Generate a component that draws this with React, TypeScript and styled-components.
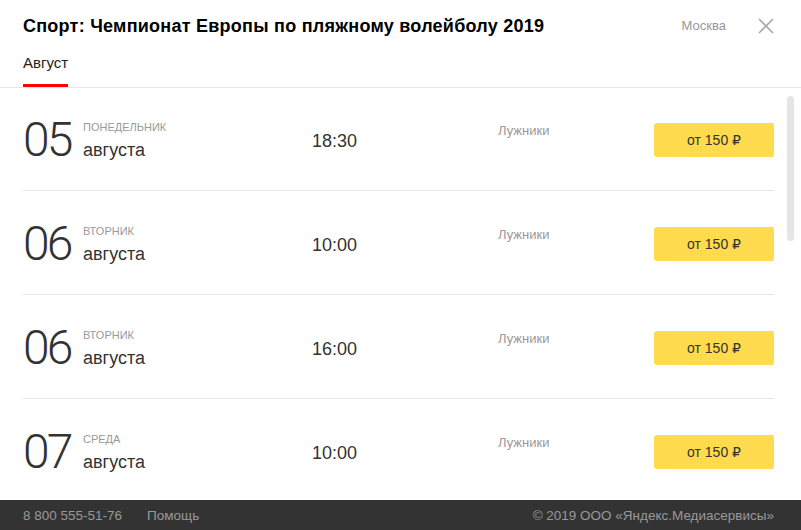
import React from "react";
import styled, { createGlobalStyle } from "styled-components";

const GlobalStyle = createGlobalStyle`
  html, body { margin: 0; padding: 0; background: #fff; }
  body { font-family: "Liberation Sans", Arial, sans-serif; }
  * { box-sizing: border-box; }
`;

const Page = styled.div`
  width: 801px;
  height: 530px;
  display: flex;
  flex-direction: column;
  background: #fff;
  overflow: hidden;
`;

const Header = styled.header`
  position: relative;
  z-index: 1;
  flex: none;
  padding: 15px 27px 0 23px;
  border-bottom: 1px solid #e6e6e6;
`;

const TitleRow = styled.div`
  display: flex;
  align-items: center;
  height: 22px;
`;

const Title = styled.h1`
  margin: 0;
  flex: 1;
  font-size: 18px;
  line-height: 22px;
  font-weight: bold;
  letter-spacing: 0.25px;
  color: #000;
`;

const City = styled.span`
  font-size: 13px;
  line-height: 16px;
  color: #999;
`;

const CloseButton = styled.button`
  margin-left: 32px;
  width: 16px;
  height: 16px;
  padding: 0;
  border: 0;
  background: none;
  display: flex;
  cursor: pointer;
`;

const Tabs = styled.nav`
  display: flex;
  margin-top: 18px;
`;

const Tab = styled.span<{ $active?: boolean }>`
  font-size: 15px;
  line-height: 16px;
  color: #222;
  padding-bottom: 13px;
  border-bottom: 3px solid ${(p) => (p.$active ? "#f00" : "transparent")};
`;

const ListWrap = styled.div`
  position: relative;
  flex: 1;
  margin-top: -1px;
  overflow: hidden;
`;

const List = styled.div`
  padding: 0 27px 0 23px;
`;

const ScrollThumb = styled.div`
  position: absolute;
  top: 9px;
  right: 7px;
  width: 7px;
  height: 145px;
  border-radius: 4px;
  background: #e5e5e5;
`;

const Row = styled.div`
  display: grid;
  grid-template-columns: 60px 229px 186px 1fr 120px;
  align-items: start;
  height: 104px;
  padding-top: 29px;
  border-bottom: 1px solid #e6e6e6;
`;

const DayNumber = styled.div`
  font-family: Roboto, "Liberation Sans", sans-serif;
  font-weight: 300;
  font-size: 48px;
  line-height: 48px;
  color: #333;
  letter-spacing: -3px;
`;

const DayInfo = styled.div`
  display: flex;
  flex-direction: column;
  margin-top: 5px;
`;

const Weekday = styled.span`
  font-size: 11px;
  line-height: 13px;
  text-transform: uppercase;
  color: #999;
`;

const Month = styled.span`
  margin-top: 6px;
  font-size: 18px;
  line-height: 20px;
  color: #333;
`;

const Time = styled.div`
  margin-top: 15px;
  font-size: 18px;
  line-height: 20px;
  color: #333;
`;

const Venue = styled.div`
  margin-top: 7px;
  font-size: 13px;
  line-height: 16px;
  color: #999;
`;

const PriceButton = styled.button`
  margin-top: 7px;
  height: 34px;
  width: 120px;
  border: 0;
  border-radius: 3px;
  background: #ffdb4d;
  font-family: "Liberation Sans", "DejaVu Sans", sans-serif;
  font-size: 14px;
  color: #333;
  cursor: pointer;
`;

const Footer = styled.footer`
  flex: none;
  height: 30px;
  display: flex;
  align-items: center;
  padding: 0 27px 0 23px;
  background: #333;
  font-size: 13.5px;
  color: #999;
`;

const FooterLink = styled.span<{ $push?: boolean }>`
  margin-left: ${(p) => (p.$push ? "auto" : "25px")};
  &:first-child { margin-left: 0; }
`;

const sessions = [
  { day: "05", weekday: "понедельник", time: "18:30" },
  { day: "06", weekday: "вторник", time: "10:00" },
  { day: "06", weekday: "вторник", time: "16:00" },
  { day: "07", weekday: "среда", time: "10:00" },
];

const CloseIcon = () => (
  <svg width="16" height="16" viewBox="0 0 16 16">
    <path d="M1 1L15 15M15 1L1 15" stroke="#a8a8a8" strokeWidth="1.6" fill="none" />
  </svg>
);

export default function App() {
  return (
    <>
      <GlobalStyle />
      <Page>
        <Header>
          <TitleRow>
            <Title>Спорт: Чемпионат Европы по пляжному волейболу 2019</Title>
            <City>Москва</City>
            <CloseButton aria-label="Закрыть">
              <CloseIcon />
            </CloseButton>
          </TitleRow>
          <Tabs>
            <Tab $active>Август</Tab>
          </Tabs>
        </Header>
        <ListWrap>
          <List>
            {sessions.map((s, i) => (
              <Row key={i}>
                <DayNumber>{s.day}</DayNumber>
                <DayInfo>
                  <Weekday>{s.weekday}</Weekday>
                  <Month>августа</Month>
                </DayInfo>
                <Time>{s.time}</Time>
                <Venue>Лужники</Venue>
                <PriceButton>от 150 ₽</PriceButton>
              </Row>
            ))}
          </List>
          <ScrollThumb />
        </ListWrap>
        <Footer>
          <FooterLink>8 800 555-51-76</FooterLink>
          <FooterLink>Помощь</FooterLink>
          <FooterLink $push>© 2019 ООО «Яндекс.Медиасервисы»</FooterLink>
        </Footer>
      </Page>
    </>
  );
}
